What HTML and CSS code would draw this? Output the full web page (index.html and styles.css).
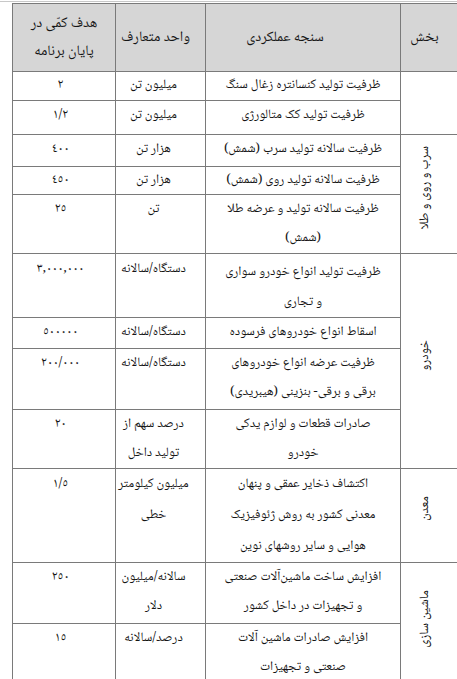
FILE: index.html
```html
<!DOCTYPE html>
<html lang="fa">
<head>
<meta charset="utf-8">
<title>سنجه‌های عملکردی</title>
<link rel="stylesheet" href="styles.css">
</head>
<body>
<div class="page">
  <div class="topline"></div>
  <table class="goals" dir="rtl">
    <colgroup>
      <col class="c-sec">
      <col class="c-metric">
      <col class="c-unit">
      <col class="c-target">
    </colgroup>
    <thead>
      <tr class="r-head">
        <th class="sec">بخش</th>
        <th class="metric">سنجه عملکردی</th>
        <th class="unit">واحد متعارف</th>
        <th class="target">هدف کمّی در<br>پایان برنامه</th>
      </tr>
    </thead>
    <tbody>
      <tr class="r29 tight">
        <td class="sec" rowspan="2"></td>
        <td class="metric">ظرفیت تولید کنسانتره زغال سنگ</td>
        <td class="unit">میلیون تن</td>
        <td class="target">٢</td>
      </tr>
      <tr class="r34">
        <td class="metric">ظرفیت تولید کک متالورژی</td>
        <td class="unit">میلیون تن</td>
        <td class="target">١/٢</td>
      </tr>
      <tr class="r32">
        <td class="sec" rowspan="3"><span class="vtext">سرب و روی و طلا</span></td>
        <td class="metric">ظرفیت سالانه تولید سرب (شمش)</td>
        <td class="unit">هزار تن</td>
        <td class="target">٤٠٠</td>
      </tr>
      <tr class="r28 tight">
        <td class="metric">ظرفیت سالانه تولید روی (شمش)</td>
        <td class="unit">هزار تن</td>
        <td class="target">٤٥٠</td>
      </tr>
      <tr class="r58">
        <td class="metric">ظرفیت سالانه تولید و عرضه طلا<br>(شمش)</td>
        <td class="unit">تن</td>
        <td class="target">٢٥</td>
      </tr>
      <tr class="r64 airy">
        <td class="sec" rowspan="4"><span class="vtext">خودرو</span></td>
        <td class="metric">ظرفیت تولید انواع خودرو سواری<br>و تجاری</td>
        <td class="unit">دستگاه/سالانه</td>
        <td class="target">٣,٠٠٠,٠٠٠</td>
      </tr>
      <tr class="r31">
        <td class="metric">اسقاط انواع خودروهای فرسوده</td>
        <td class="unit">دستگاه/سالانه</td>
        <td class="target">٥٠٠٠٠٠</td>
      </tr>
      <tr class="r61">
        <td class="metric">ظرفیت عرضه انواع خودروهای<br>برقی و برقی- بنزینی (هیبریدی)</td>
        <td class="unit">دستگاه/سالانه</td>
        <td class="target">٢٠٠/٠٠٠</td>
      </tr>
      <tr class="r59">
        <td class="metric">صادرات قطعات و لوازم یدکی<br>خودرو</td>
        <td class="unit">درصد سهم از<br>تولید داخل</td>
        <td class="target">٢٠</td>
      </tr>
      <tr class="r94 loose">
        <td class="sec"><span class="vtext">معدن</span></td>
        <td class="metric">اکتشاف ذخایر عمقی و پنهان<br>معدنی کشور به روش ژئوفیزیک<br>هوایی و سایر روشهای نوین</td>
        <td class="unit">میلیون کیلومتر<br>خطی</td>
        <td class="target">١/٥</td>
      </tr>
      <tr class="r61">
        <td class="sec" rowspan="2"><span class="vtext">ماشین سازی</span></td>
        <td class="metric">افزایش ساخت ماشین‌آلات صنعتی<br>و تجهیزات در داخل کشور</td>
        <td class="unit">سالانه/میلیون<br>دلار</td>
        <td class="target">٢٥٠</td>
      </tr>
      <tr class="r64">
        <td class="metric">افزایش صادرات ماشین آلات<br>صنعتی و تجهیزات</td>
        <td class="unit">درصد/سالانه</td>
        <td class="target">١٥</td>
      </tr>
    </tbody>
  </table>
</div>
</body>
</html>
```

FILE: styles.css
```css
html, body {
  margin: 0;
  padding: 0;
  background: #ffffff;
  overflow: hidden;
}

.page {
  width: 457px;
  height: 679px;
  overflow: hidden;
}

.topline {
  height: 1px;
  margin-top: 1px;
  background: #c8c8c8;
  width: 457px;
}

.goals {
  margin: 1px 0 0 12px;
  width: 458px;
  border-collapse: collapse;
  table-layout: fixed;
  direction: rtl;
  font-family: "Noto Naskh Arabic", "DejaVu Sans", sans-serif;
  font-size: 13px;
  color: #151515;
}

.c-sec { width: 70px; }
.c-metric { width: 195px; }
.c-unit { width: 90px; }
.c-target { width: 103px; }

.goals th,
.goals td {
  border: 1px solid #7a7a7a;
  padding: 0 4px;
  text-align: center;
  white-space: nowrap;
}

.goals th {
  background: #d6d6d6;
  font-weight: normal;
  font-size: 14.5px;
  line-height: 28px;
  vertical-align: middle;
}

.goals td {
  line-height: 29px;
  vertical-align: top;
}

.goals .tight td { line-height: 26px; }
.goals .airy td { line-height: 30px; padding-top: 3px; }
.goals .loose td { line-height: 31px; }

.goals .sec {
  padding: 0 26px 0 4px;
}

.goals td.sec {
  vertical-align: middle;
}

.goals th.metric { padding: 0 36px 0 0; }
.goals th.unit { padding: 0 10px 0 0; }

.goals td.unit {
  padding: 0 14px 0 0;
}

.goals td.target {
  padding: 0 7px 0 0;
}

.goals .airy td.sec { padding-top: 0; }

.vtext {
  display: inline-block;
  writing-mode: vertical-rl;
  transform: rotate(180deg);
  line-height: 16px;
  font-size: 13px;
  white-space: nowrap;
}

.r-head { height: 68px; }
.r28 { height: 28px; }
.r29 { height: 29px; }
.r31 { height: 31px; }
.r32 { height: 32px; }
.r34 { height: 34px; }
.r58 { height: 58px; }
.r59 { height: 59px; }
.r61 { height: 61px; }
.r64 { height: 64px; }
.r94 { height: 94px; }
```
